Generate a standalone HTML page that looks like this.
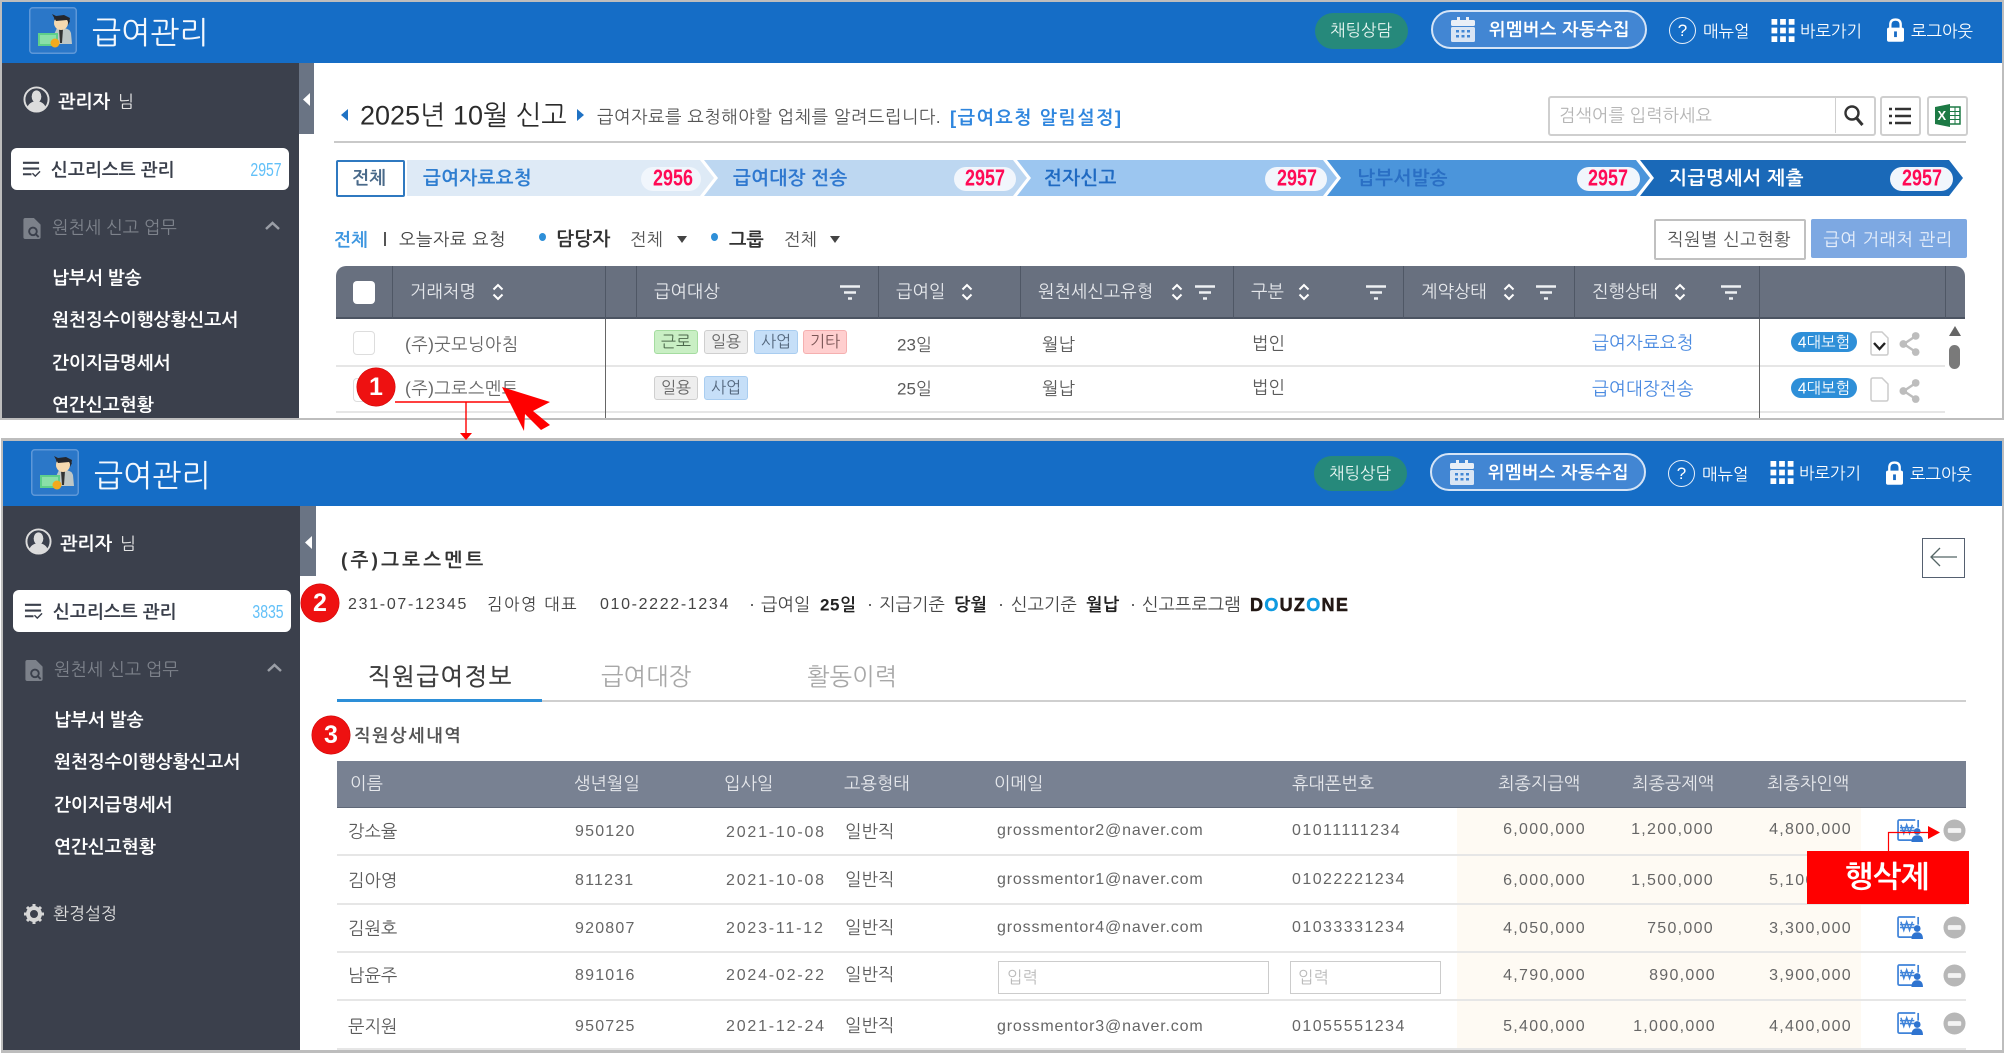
<!DOCTYPE html>
<html lang="ko"><head><meta charset="utf-8"><title>급여관리</title>
<style>
html,body{margin:0;padding:0;background:#fff}
body{width:2004px;height:1053px;position:relative;overflow:hidden;font-family:"Liberation Sans","NanumGothic","Noto Sans CJK KR",sans-serif;color:#5a5a5a}
.p{position:absolute;left:0;width:2004px;overflow:hidden}
.b{position:absolute}
.t{position:absolute;white-space:nowrap;line-height:1;transform:translateY(calc(-50% + 1px));font-size:17px}
.c{position:absolute;white-space:nowrap;line-height:1;transform:translate(-50%,calc(-50% + 1px));font-size:17px}
.w{color:#fff}.bd{font-weight:700}
.menu{color:#fff;font-weight:700;font-size:18px}
.st{font-weight:700;font-size:19px;letter-spacing:.3px}
.bn{position:absolute;white-space:nowrap;line-height:1;transform:translate(-50%,-50%) scaleX(.78);font-size:23px;font-weight:700;color:#ff0a55}
.pill{position:absolute;background:#f1f6fc;border-radius:12px;height:24px;top:167px}
.tag{position:absolute;height:22px;line-height:24px;width:42px;text-align:center;font-size:16px;border-radius:3px;border:1px solid}
.tg{background:#c9efc4;border-color:#a5dca0;color:#4d6a4d}
.ty{background:#eeeeee;border-color:#cfcfcf;color:#666}
.tb{background:#c6dff8;border-color:#a9cdf0;color:#54677d}
.tr{background:#ffcfcf;border-color:#f5b0b0;color:#7a5555}
.hd{color:#e6e8ec;font-size:17.5px}
.rowline{position:absolute;height:2px;background:#e6e6e6}
.n{position:absolute;white-space:nowrap;line-height:1;transform:translateY(calc(-50% + 1px));font-size:16px;letter-spacing:1.2px;color:#666}
.d{letter-spacing:1.8px}
.ph{letter-spacing:1.45px}
.em{letter-spacing:.85px}
.r{position:absolute;white-space:nowrap;line-height:1;transform:translateY(calc(-50% + 1px));font-size:16px;letter-spacing:1.3px;color:#666;text-align:right}
.circle{position:absolute;width:38px;height:38px;border-radius:50%;background:#ee1111;color:#fff;font-weight:700;font-size:25px;text-align:center;line-height:38px;box-shadow:0 0 0 .5px #c00}
svg{position:absolute;overflow:visible}
</style></head><body>
<svg width="0" height="0" style="position:absolute">
<defs>
<symbol id="logo" viewBox="0 0 48 47" overflow="visible">
<rect x=".75" y=".75" width="46.5" height="45.5" rx="3" fill="#2b77c8" stroke="#5d97d8" stroke-width="1.5"/>
<path d="M22 34l6-13h7q6 1 7 5l1 11H22z" fill="#bfc7c6"/>
<path d="M30 22h4l-1 14h-2z" fill="#333"/>
<rect x="9" y="26" width="20" height="13" fill="#5fcf8a"/>
<rect x="11" y="28" width="16" height="9" fill="#8ae0a8"/>
<circle cx="26" cy="36" r="4.5" fill="#f3aa1e"/>
<path d="M25 10l3 2 8-3 5 5-2 4H26z" fill="#2b2b30"/>
<ellipse cx="32" cy="16" rx="7" ry="7" fill="#f5d9b0"/>
<path d="M23 7l4 7 11-1 2 3 1-5-6-3-8 1z" fill="#24262c"/>
</symbol>
<symbol id="sort" viewBox="0 0 12 18" overflow="visible"><path d="M1.5 6.5L6 2l4.500 4.500M1.500 11.500L6 16l4.500-4.500" fill="none" stroke="#fff" stroke-width="2"/></symbol>
<symbol id="filter" viewBox="0 0 20 15" overflow="visible"><path d="M0 1.500h20M4 7.500h12M8 13.500h4" stroke="#eef0f3" stroke-width="2.600"/></symbol>
<symbol id="user" viewBox="0 0 28 28" overflow="visible"><circle cx="14" cy="14" r="12.500" fill="#3b404c" stroke="#dcdcdc" stroke-width="2"/><ellipse cx="14" cy="11" rx="5" ry="6.500" fill="#dcdcdc"/><path d="M4.500 22c2-5 6-6 9.500-6s7.500 1 9.500 6c-5 5-14 5-19 0z" fill="#dcdcdc"/></symbol>
<symbol id="mlist" viewBox="0 0 20 20" overflow="visible"><path d="M1 3h17M1 9h17M1 15h9" stroke="#3b404c" stroke-width="2.200"/><path d="M11 14l3 3 5-5" fill="none" stroke="#3b404c" stroke-width="1.500"/></symbol>
<symbol id="doc" viewBox="0 0 18 22" overflow="visible"><path d="M0 2q0-2 2-2h9l7 7v13q0 2-2 2H2q-2 0-2-2z" fill="#7c818a"/><circle cx="10" cy="14" r="4" fill="none" stroke="#3b404c" stroke-width="2"/><path d="M13 17l3 3" stroke="#3b404c" stroke-width="2"/></symbol>
<symbol id="cal" viewBox="0 0 24 26" overflow="visible"><path d="M6 0h3v4H6zM15 0h3v4h-3z" fill="#e9eff7"/><rect y="3" width="24" height="6" rx="1.500" fill="#e9eff7"/><rect y="10" width="24" height="15" rx="1.500" fill="#d9e5f4"/><path d="M5 13h3v2.500H5zM10.500 13h3v2.500h-3zM16 13h3v2.500h-3zM5 18h3v2.500H5zM10.500 18h3v2.500h-3zM16 18h3v2.500h-3z" fill="#4286d3"/></symbol>
<symbol id="grid" viewBox="0 0 24 24" overflow="visible"><path d="M0 0h6v6H0zM9 0h6v6H9zM18 0h6v6h-6zM0 9h6v6H0zM9 9h6v6H9zM18 9h6v6h-6zM0 18h6v6H0zM9 18h6v6H9zM18 18h6v6h-6z" fill="#fff"/></symbol>
<symbol id="lock" viewBox="0 0 18 25" overflow="visible"><path d="M3.500 11V7q0-5.500 5.500-5.500T14.500 7v4" fill="none" stroke="#fff" stroke-width="2.500"/><rect y="10" width="18" height="15" rx="2" fill="#fff"/><rect x="7.500" y="14" width="3" height="6" fill="#1a6cc5"/></symbol>
<symbol id="share" viewBox="0 0 22 26" overflow="visible"><path d="M17 5L5 13l12 8" fill="none" stroke="#bdbdbd" stroke-width="2.500"/><circle cx="17.500" cy="4.500" r="4" fill="#bdbdbd"/><circle cx="4.500" cy="13" r="4" fill="#bdbdbd"/><circle cx="17.500" cy="21.500" r="4" fill="#bdbdbd"/></symbol>
<symbol id="pay" viewBox="0 0 28 24" overflow="visible"><path d="M19 1H2.500Q1 1 1 2.500v18Q1 22 2.500 22H22" fill="#fff" stroke="#3f83d9" stroke-width="1.800"/><path d="M22 1v8" stroke="#3f83d9" stroke-width="1.800"/><path d="M4 6l3 9 3-9 3 9 3-9M3 9h15M3 12h15" fill="none" stroke="#3f83d9" stroke-width="1.500"/><circle cx="21" cy="13" r="3.500" fill="#2f74d0"/><path d="M15 24q0-7 6-7t6 7z" fill="#2f74d0"/></symbol>
<symbol id="minus" viewBox="0 0 24 24" overflow="visible"><circle cx="12" cy="12" r="11.500" fill="#b7b7b7"/><rect x="5" y="9.500" width="14" height="5" rx="1.500" fill="#f3f3f3"/></symbol>
</defs></svg>

<!-- PANEL 1 -->
<div class="p" style="top:0;height:418px">
<div class="b" style="left:2px;top:2px;width:2000px;height:61px;background:#156dc6"></div>
<svg style="left:29px;top:7px" width="48" height="47"><use href="#logo"/></svg>
<div class="t w" style="left:92px;top:32px;font-size:31px;color:#f4f8fd">급여관리</div>
<div class="b" style="left:1315px;top:13px;width:93px;height:36px;border-radius:18px;background:#26897b"></div>
<div class="c w" style="left:1361px;top:30px;font-size:16.500px;color:#e8f5f1">채팅상담</div>
<div class="b" style="left:1431px;top:10px;width:212px;height:35px;border-radius:20px;background:#4286d3;border:2px solid #d5e4f6"></div>
<svg style="left:1451px;top:17px" width="24" height="26"><use href="#cal"/></svg>
<div class="t w bd" style="left:1489px;top:29px;font-size:17.500px;letter-spacing:.5px">위멤버스 자동수집</div>
<div class="b" style="left:1669px;top:17px;width:25px;height:25px;border:1.500px solid #e8f0fa;border-radius:50%;color:#fff;font-size:17px;line-height:25px;text-align:center">?</div>
<div class="t w" style="left:1703px;top:31px;font-size:16.500px">매뉴얼</div>
<svg style="left:1771px;top:19px" width="24" height="23"><use href="#grid"/></svg>
<div class="t w" style="left:1800px;top:31px;font-size:16.500px">바로가기</div>
<svg style="left:1887px;top:18px" width="17" height="24"><use href="#lock"/></svg>
<div class="t w" style="left:1911px;top:31px;font-size:16.500px">로그아웃</div>

<div class="b" style="left:2px;top:63px;width:297px;height:355px;background:#3b404c"></div>
<div class="b" style="left:299px;top:63px;width:15px;height:71px;background:#6a7484"></div>
<svg style="left:303px;top:93px" width="7" height="13"><path d="M7 0v13L0 6.500z" fill="#fff"/></svg>
<svg style="left:23px;top:86px" width="27" height="27"><use href="#user"/></svg>
<div class="t w bd" style="left:58px;top:101px;font-size:18.500px">관리자</div>
<div class="t" style="left:118px;top:101px;font-size:17px;color:#e4e4e4">님</div>
<div class="b" style="left:11px;top:148px;width:278px;height:42px;background:#fff;border-radius:6px"></div>
<svg style="left:22px;top:160px" width="19" height="19"><use href="#mlist"/></svg>
<div class="t bd" style="left:51px;top:169px;font-size:18px;color:#3b404c">신고리스트 관리</div>
<div class="c" style="left:266px;top:169px;font-size:18px;color:#62c0f8;transform:translate(-50%,calc(-50% + 1px)) scaleX(.78)">2957</div>
<svg style="left:23px;top:218px" width="18" height="21"><use href="#doc"/></svg>
<div class="t" style="left:52px;top:227px;font-size:17.500px;color:#7e838c">원천세 신고 업무</div>
<svg style="left:265px;top:221px" width="15" height="10"><path d="M1 8l6.500-6L14 8" fill="none" stroke="#9a9ea6" stroke-width="2.500"/></svg>
<div class="t menu" style="left:52px;top:277px">납부서 발송</div>
<div class="t menu" style="left:52px;top:319px">원천징수이행상황신고서</div>
<div class="t menu" style="left:52px;top:362px">간이지급명세서</div>
<div class="t menu" style="left:52px;top:404px">연간신고현황</div>

<svg style="left:341px;top:109px" width="7" height="12"><path d="M7 0v12L0 6z" fill="#1f72c4"/></svg>
<div class="t" style="left:360px;top:115px;font-size:27px;color:#2b2b2b">2025년 10월 신고</div>
<svg style="left:577px;top:109px" width="7" height="12"><path d="M0 0v12l7-6z" fill="#1f72c4"/></svg>
<div class="t" style="left:597px;top:117px;font-size:17.600px;color:#555;letter-spacing:.45px">급여자료를 요청해야할 업체를 알려드립니다.</div>
<div class="t bd" style="left:950px;top:117px;font-size:18.500px;color:#2f86de;letter-spacing:1.45px">[급여요청 알림설정]</div>
<div class="b" style="left:334px;top:141px;width:1632px;height:2px;background:#c9c9c9"></div>

<div class="b" style="left:1548px;top:96px;width:324px;height:36px;border:2px solid #cfcfcf;border-radius:3px;background:#fff"></div>
<div class="b" style="left:1835px;top:97px;width:1px;height:36px;background:#cfcfcf"></div>
<div class="t" style="left:1559px;top:115px;font-size:17.500px;color:#b5b5b5">검색어를 입력하세요</div>
<svg style="left:1844px;top:105px" width="20" height="21"><circle cx="8" cy="8" r="6.500" fill="none" stroke="#333" stroke-width="2.400"/><path d="M12.500 13l6 7" stroke="#333" stroke-width="3"/></svg>
<div class="b" style="left:1880px;top:96px;width:37px;height:36px;border:2px solid #cfcfcf;border-radius:3px"></div>
<svg style="left:1889px;top:107px" width="22" height="18"><path d="M0 2h3M6 2h16M0 9h3M6 9h16M0 16h3M6 16h16" stroke="#333" stroke-width="2.500"/></svg>
<div class="b" style="left:1927px;top:96px;width:37px;height:36px;border:2px solid #cfcfcf;border-radius:3px"></div>
<svg style="left:1935px;top:104px" width="26" height="23"><path d="M0 3l15-3v23L0 20z" fill="#1d7a45"/><path d="M15 3h10v17H15" fill="none" stroke="#1d7a45" stroke-width="1.500"/><path d="M15 7.500h10M15 11.500h10M15 15.500h10M20 3v17" stroke="#1d7a45"/><text x="2.500" y="16" font-size="13" font-weight="700" fill="#fff" font-family="Liberation Sans">X</text></svg>

<svg style="left:0;top:0" width="2004" height="200">
<polygon points="407,160 700,160 714,178 700,196 407,196" fill="#deeaf6"/>
<polygon points="704,160 1013,160 1027,178 1013,196 704,196 718,178" fill="#bdd7f1"/>
<polygon points="1017,160 1323,160 1337,178 1323,196 1017,196 1031,178" fill="#9cc6f0"/>
<polygon points="1327,160 1636,160 1650,178 1636,196 1327,196 1341,178" fill="#4b95db"/>
<polygon points="1640,160 1949,160 1963,178 1949,196 1640,196 1654,178" fill="#1a69b8"/>
</svg>
<div class="b" style="left:336px;top:160px;width:65px;height:33px;background:#fff;border:2px solid #2f79c0;border-radius:2px"></div>
<div class="c bd" style="left:369px;top:177px;font-size:18px;color:#4a6a8a">전체</div>
<div class="t st" style="left:423px;top:178px;color:#2f7ed0">급여자료요청</div>
<div class="pill" style="left:641px;width:60px"></div><div class="bn" style="left:673px;top:178px">2956</div>
<div class="t st" style="left:733px;top:178px;color:#2f78cf">급여대장 전송</div>
<div class="pill" style="left:954px;width:62px"></div><div class="bn" style="left:985px;top:178px">2957</div>
<div class="t st" style="left:1044px;top:178px;color:#1f6ac2">전자신고</div>
<div class="pill" style="left:1265px;width:62px"></div><div class="bn" style="left:1297px;top:178px">2957</div>
<div class="t st" style="left:1357px;top:178px;color:#2a6fc4">납부서발송</div>
<div class="pill" style="left:1577px;width:63px"></div><div class="bn" style="left:1608px;top:178px">2957</div>
<div class="t w st" style="left:1669px;top:178px;letter-spacing:.6px">지급명세서 제출</div>
<div class="pill" style="left:1890px;width:63px"></div><div class="bn" style="left:1922px;top:178px">2957</div>

<div class="t bd" style="left:334px;top:239px;font-size:18px;color:#3f97e0">전체</div>
<div class="b" style="left:384px;top:232px;width:2px;height:14px;background:#555"></div>
<div class="t" style="left:399px;top:239px;font-size:17.500px;color:#444;letter-spacing:.5px">오늘자료 요청</div>
<div class="b" style="left:539px;top:233px;width:7px;height:8px;border-radius:50%;background:#2e8fd8"></div>
<div class="t bd" style="left:556px;top:239px;font-size:19px;color:#333;letter-spacing:.3px">담당자</div>
<div class="t" style="left:630px;top:239px;font-size:17.500px;color:#555">전체</div>
<svg style="left:677px;top:236px" width="10" height="7"><path d="M0 0h10L5 7z" fill="#444"/></svg>
<div class="b" style="left:711px;top:233px;width:7px;height:8px;border-radius:50%;background:#2e8fd8"></div>
<div class="t bd" style="left:729px;top:239px;font-size:18.500px;color:#333">그룹</div>
<div class="t" style="left:784px;top:239px;font-size:17.500px;color:#555">전체</div>
<svg style="left:830px;top:236px" width="10" height="7"><path d="M0 0h10L5 7z" fill="#444"/></svg>

<div class="b" style="left:1654px;top:219px;width:148px;height:37px;border:2px solid #c0c0c0;border-radius:2px;background:#fff"></div>
<div class="c" style="left:1729px;top:239px;font-size:17.500px;color:#555;letter-spacing:.5px">직원별 신고현황</div>
<div class="b" style="left:1811px;top:219px;width:156px;height:39px;background:#7da8e2;border-radius:2px"></div>
<div class="c" style="left:1888px;top:239px;font-size:17.500px;color:#e9f0fb;letter-spacing:.5px">급여 거래처 관리</div>

<div class="b" style="left:336px;top:266px;width:1629px;height:51px;background:#68707f;border-bottom:2px solid #4c5462;border-radius:10px 10px 0 0"></div>
<div class="b" style="left:392px;top:266px;width:1px;height:53px;background:#4f5765"></div>
<div class="b" style="left:605px;top:266px;width:1px;height:53px;background:#4f5765"></div>
<div class="b" style="left:636px;top:266px;width:1px;height:53px;background:#4f5765"></div>
<div class="b" style="left:878px;top:266px;width:1px;height:53px;background:#4f5765"></div>
<div class="b" style="left:1020px;top:266px;width:1px;height:53px;background:#4f5765"></div>
<div class="b" style="left:1233px;top:266px;width:1px;height:53px;background:#4f5765"></div>
<div class="b" style="left:1403px;top:266px;width:1px;height:53px;background:#4f5765"></div>
<div class="b" style="left:1574px;top:266px;width:1px;height:53px;background:#4f5765"></div>
<div class="b" style="left:1759px;top:266px;width:1px;height:53px;background:#4f5765"></div>
<div class="b" style="left:1945px;top:266px;width:1px;height:53px;background:#4f5765"></div>
<div class="b" style="left:353px;top:281px;width:22px;height:23px;background:#fff;border-radius:4px"></div>
<div class="t hd" style="left:410px;top:291px">거래처명</div>
<svg style="left:492px;top:283px" width="12" height="18"><use href="#sort"/></svg>
<div class="t hd" style="left:654px;top:291px">급여대상</div>
<svg style="left:840px;top:285px" width="20" height="15"><use href="#filter"/></svg>
<div class="t hd" style="left:896px;top:291px">급여일</div>
<svg style="left:961px;top:283px" width="12" height="18"><use href="#sort"/></svg>
<div class="t hd" style="left:1038px;top:291px">원천세신고유형</div>
<svg style="left:1171px;top:283px" width="12" height="18"><use href="#sort"/></svg>
<svg style="left:1195px;top:285px" width="20" height="15"><use href="#filter"/></svg>
<div class="t hd" style="left:1251px;top:291px">구분</div>
<svg style="left:1298px;top:283px" width="12" height="18"><use href="#sort"/></svg>
<svg style="left:1366px;top:285px" width="20" height="15"><use href="#filter"/></svg>
<div class="t hd" style="left:1421px;top:291px">계약상태</div>
<svg style="left:1503px;top:283px" width="12" height="18"><use href="#sort"/></svg>
<svg style="left:1536px;top:285px" width="20" height="15"><use href="#filter"/></svg>
<div class="t hd" style="left:1592px;top:291px">진행상태</div>
<svg style="left:1674px;top:283px" width="12" height="18"><use href="#sort"/></svg>
<svg style="left:1721px;top:285px" width="20" height="15"><use href="#filter"/></svg>

<div class="rowline" style="left:336px;top:365px;width:1609px"></div>
<div class="rowline" style="left:336px;top:411px;width:1609px"></div>
<div class="b" style="left:605px;top:319px;width:1px;height:99px;background:#666"></div>
<div class="b" style="left:1759px;top:319px;width:1px;height:99px;background:#666"></div>
<div class="b" style="left:353px;top:331px;width:20px;height:22px;border:1.500px solid #ddd;border-radius:4px"></div>
<div class="b" style="left:353px;top:378px;width:20px;height:22px;border:1.500px solid #ddd;border-radius:4px"></div>
<div class="t" style="left:405px;top:344px;font-size:17.500px;color:#666;letter-spacing:.4px">(주)굿모닝아침</div>
<div class="t" style="left:405px;top:388px;font-size:17.500px;color:#666;letter-spacing:.4px">(주)그로스멘트</div>
<div class="tag tg" style="left:654px;top:330px">근로</div>
<div class="tag ty" style="left:704px;top:330px">일용</div>
<div class="tag tb" style="left:754px;top:330px">사업</div>
<div class="tag tr" style="left:803px;top:330px">기타</div>
<div class="tag ty" style="left:654px;top:376px">일용</div>
<div class="tag tb" style="left:704px;top:376px">사업</div>
<div class="t" style="left:897px;top:344px;font-size:17px">23일</div>
<div class="t" style="left:897px;top:388px;font-size:17px">25일</div>
<div class="t" style="left:1042px;top:344px;font-size:17.500px">월납</div>
<div class="t" style="left:1042px;top:388px;font-size:17.500px">월납</div>
<div class="t" style="left:1252px;top:343px;font-size:17.500px">법인</div>
<div class="t" style="left:1252px;top:387px;font-size:17.500px">법인</div>
<div class="t" style="left:1592px;top:342px;font-size:18px;color:#4a8ae0">급여자료요청</div>
<div class="t" style="left:1592px;top:388px;font-size:18px;color:#4a8ae0">급여대장전송</div>
<div class="b" style="left:1791px;top:332px;width:66px;height:20px;border-radius:10px;background:#2e8fd8"></div>
<div class="c w" style="left:1824px;top:342px;font-size:15.500px">4대보험</div>
<div class="b" style="left:1791px;top:378px;width:66px;height:20px;border-radius:10px;background:#2e8fd8"></div>
<div class="c w" style="left:1824px;top:388px;font-size:15.500px">4대보험</div>
<svg style="left:1870px;top:331px" width="19" height="25"><path d="M1 3q0-2 2-2h9l6 6v15q0 2-2 2H3q-2 0-2-2z" fill="#fff" stroke="#ccc" stroke-width="1.500"/><path d="M4 12l5.500 6L15 12" fill="none" stroke="#222" stroke-width="2.400"/></svg>
<svg style="left:1870px;top:377px" width="19" height="25"><path d="M1 3q0-2 2-2h9l6 6v15q0 2-2 2H3q-2 0-2-2z" fill="#fff" stroke="#ccc" stroke-width="1.500"/></svg>
<svg style="left:1899px;top:331px" width="21" height="26"><use href="#share"/></svg>
<svg style="left:1899px;top:378px" width="21" height="26"><use href="#share"/></svg>
<svg style="left:1949px;top:326px" width="12" height="10"><path d="M6 0l6 10H0z" fill="#666"/></svg>
<div class="b" style="left:1949px;top:345px;width:11px;height:24px;border-radius:6px;background:#7a7a7a"></div>
</div>

<!-- frame lines -->
<div class="b" style="left:0;top:0;width:2004px;height:2px;background:#bdbdbd"></div>
<div class="b" style="left:0;top:0;width:2px;height:420px;background:#bdbdbd"></div>
<div class="b" style="left:2002px;top:0;width:2px;height:420px;background:#bdbdbd"></div>
<div class="b" style="left:0;top:418px;width:2004px;height:2px;background:#bdbdbd"></div>

<!-- PANEL 2 -->
<div class="p" style="top:438px;height:615px">
<div style="position:absolute;left:0;top:-438px;width:2004px;height:1053px">
<div class="b" style="left:2px;top:438px;width:2001px;height:3px;background:#bdbdbd"></div>
<div class="b" style="left:1px;top:438px;width:2px;height:615px;background:#bdbdbd"></div>
<div class="b" style="left:2002px;top:438px;width:2px;height:615px;background:#bdbdbd"></div>
<div class="b" style="left:1px;top:1050px;width:2003px;height:3px;background:#bdbdbd"></div>
<div class="b" style="left:3px;top:441px;width:1999px;height:65px;background:#156dc6"></div>
<svg style="left:31px;top:449px" width="48" height="47"><use href="#logo"/></svg>
<div class="t" style="left:94px;top:475px;font-size:31px;color:#f4f8fd">급여관리</div>
<div class="b" style="left:1314px;top:456px;width:93px;height:35px;border-radius:18px;background:#26897b"></div>
<div class="c" style="left:1360px;top:473px;font-size:16.500px;color:#e8f5f1">채팅상담</div>
<div class="b" style="left:1430px;top:453px;width:212px;height:34px;border-radius:20px;background:#4286d3;border:2px solid #d5e4f6"></div>
<svg style="left:1450px;top:460px" width="24" height="26"><use href="#cal"/></svg>
<div class="t w bd" style="left:1488px;top:472px;font-size:17.500px;letter-spacing:.5px">위멤버스 자동수집</div>
<div class="b" style="left:1668px;top:460px;width:25px;height:25px;border:1.500px solid #e8f0fa;border-radius:50%;color:#fff;font-size:17px;line-height:25px;text-align:center">?</div>
<div class="t w" style="left:1702px;top:474px;font-size:16.500px">매뉴얼</div>
<svg style="left:1770px;top:461px" width="24" height="23"><use href="#grid"/></svg>
<div class="t w" style="left:1799px;top:473px;font-size:16.500px">바로가기</div>
<svg style="left:1886px;top:461px" width="17" height="24"><use href="#lock"/></svg>
<div class="t w" style="left:1910px;top:474px;font-size:16.500px">로그아웃</div>

<div class="b" style="left:3px;top:506px;width:297px;height:544px;background:#3b404c"></div>
<div class="b" style="left:300px;top:506px;width:16px;height:70px;background:#6a7484"></div>
<svg style="left:305px;top:536px" width="7" height="13"><path d="M7 0v13L0 6.500z" fill="#fff"/></svg>
<svg style="left:25px;top:528px" width="27" height="27"><use href="#user"/></svg>
<div class="t w bd" style="left:60px;top:543px;font-size:18.500px">관리자</div>
<div class="t" style="left:120px;top:543px;font-size:17px;color:#e4e4e4">님</div>
<div class="b" style="left:13px;top:590px;width:278px;height:42px;background:#fff;border-radius:6px"></div>
<svg style="left:24px;top:602px" width="19" height="19"><use href="#mlist"/></svg>
<div class="t bd" style="left:53px;top:611px;font-size:18px;color:#3b404c">신고리스트 관리</div>
<div class="c" style="left:268px;top:611px;font-size:18px;color:#62c0f8;transform:translate(-50%,calc(-50% + 1px)) scaleX(.78)">3835</div>
<svg style="left:25px;top:660px" width="18" height="21"><use href="#doc"/></svg>
<div class="t" style="left:54px;top:669px;font-size:17.500px;color:#7e838c">원천세 신고 업무</div>
<svg style="left:267px;top:663px" width="15" height="10"><path d="M1 8l6.500-6L14 8" fill="none" stroke="#9a9ea6" stroke-width="2.500"/></svg>
<div class="t menu" style="left:54px;top:719px">납부서 발송</div>
<div class="t menu" style="left:54px;top:761px">원천징수이행상황신고서</div>
<div class="t menu" style="left:54px;top:804px">간이지급명세서</div>
<div class="t menu" style="left:54px;top:846px">연간신고현황</div>
<svg style="left:24px;top:904px" width="20" height="20"><circle cx="10" cy="10" r="6" fill="none" stroke="#d6d6d6" stroke-width="4"/><path d="M10 0v4M10 16v4M0 10h4M16 10h4M3 3l3 3M14 14l3 3M17 3l-3 3M6 14l-3 3" stroke="#d6d6d6" stroke-width="3"/></svg>
<div class="t" style="left:53px;top:913px;font-size:17px;color:#e0e0e0">환경설정</div>

<div class="t bd" style="left:341px;top:560px;font-size:19px;color:#333;letter-spacing:3.200px">(주)그로스멘트</div>
<div class="b" style="left:1922px;top:538px;width:41px;height:38px;border:1.500px solid #556070"></div>
<svg style="left:1930px;top:547px" width="27" height="20"><path d="M27 10H1M10 1l-9 9 9 9" fill="none" stroke="#566" stroke-width="1.300"/></svg>
<div class="t" style="left:348px;top:604px;font-size:16px;letter-spacing:1.700px;color:#444">231-07-12345</div>
<div class="t" style="left:487px;top:604px;font-size:16.500px;letter-spacing:1.500px;color:#444">김아영 대표</div>
<div class="t" style="left:600px;top:604px;font-size:16px;letter-spacing:1.650px;color:#444">010-2222-1234</div>
<div class="b" style="left:751px;top:604px;width:2px;height:2px;background:#666"></div>
<div class="t" style="left:761px;top:604px;font-size:17.500px;color:#444">급여일</div>
<div class="t bd" style="left:820px;top:604px;font-size:17px;color:#222;letter-spacing:.6px">25일</div>
<div class="b" style="left:869px;top:604px;width:2px;height:2px;background:#666"></div>
<div class="t" style="left:879px;top:604px;font-size:17.500px;color:#444">지급기준</div>
<div class="t bd" style="left:954px;top:604px;font-size:17.500px;color:#222">당월</div>
<div class="b" style="left:1000px;top:604px;width:2px;height:2px;background:#666"></div>
<div class="t" style="left:1011px;top:604px;font-size:17.500px;color:#444">신고기준</div>
<div class="t bd" style="left:1086px;top:604px;font-size:17.500px;color:#222">월납</div>
<div class="b" style="left:1132px;top:604px;width:2px;height:2px;background:#666"></div>
<div class="t" style="left:1142px;top:604px;font-size:17.500px;color:#444">신고프로그램</div>
<div class="t bd" style="left:1250px;top:604px;font-size:18px;color:#231815;letter-spacing:1.300px;-webkit-text-stroke:.5px #231815">D<span style="color:#0e9ae0;-webkit-text-stroke:.5px #0e9ae0">O</span>UZ<span style="color:#0e9ae0;-webkit-text-stroke:.5px #0e9ae0">O</span>NE</div>

<div class="t" style="left:368px;top:677px;font-size:24px;color:#3a3a3a;letter-spacing:1.600px;-webkit-text-stroke:.4px #3a3a3a">직원급여정보</div>
<div class="t" style="left:601px;top:677px;font-size:24px;color:#a8a8a8">급여대장</div>
<div class="t" style="left:807px;top:677px;font-size:24px;color:#a8a8a8">활동이력</div>
<div class="b" style="left:337px;top:700px;width:1629px;height:2px;background:#cfcfcf"></div>
<div class="b" style="left:337px;top:699px;width:205px;height:3px;background:#2d8fd8"></div>
<div class="t bd" style="left:354px;top:735px;font-size:17.500px;color:#555;letter-spacing:1.600px">직원상세내역</div>

<div class="b" style="left:337px;top:761px;width:1629px;height:46px;background:#788192;border-bottom:1.500px solid #5f6878"></div>
<div class="t hd" style="left:350px;top:783px">이름</div>
<div class="t hd" style="left:574px;top:783px">생년월일</div>
<div class="t hd" style="left:724px;top:783px">입사일</div>
<div class="t hd" style="left:844px;top:783px">고용형태</div>
<div class="t hd" style="left:994px;top:783px">이메일</div>
<div class="t hd" style="left:1292px;top:783px">휴대폰번호</div>
<div class="t hd" style="left:1498px;top:783px">최종지급액</div>
<div class="t hd" style="left:1632px;top:783px">최종공제액</div>
<div class="t hd" style="left:1767px;top:783px">최종차인액</div>

<div class="b" style="left:1457px;top:808px;width:404px;height:240px;background:#fefaf3"></div>
<div class="rowline" style="left:337px;top:854px;width:1629px"></div>
<div class="rowline" style="left:337px;top:903px;width:1629px"></div>
<div class="rowline" style="left:337px;top:951px;width:1629px"></div>
<div class="rowline" style="left:337px;top:999px;width:1629px"></div>
<div class="rowline" style="left:337px;top:1048px;width:1629px"></div>

<div class="t" style="left:348px;top:831px;font-size:17.500px">강소율</div>
<div class="t" style="left:348px;top:880px;font-size:17.500px">김아영</div>
<div class="t" style="left:348px;top:928px;font-size:17.500px">김원호</div>
<div class="t" style="left:348px;top:975px;font-size:17.500px">남윤주</div>
<div class="t" style="left:348px;top:1026px;font-size:17.500px">문지원</div>
<div class="n" style="left:575px;top:831px">950120</div>
<div class="n" style="left:575px;top:880px">811231</div>
<div class="n" style="left:575px;top:928px">920807</div>
<div class="n" style="left:575px;top:975px">891016</div>
<div class="n" style="left:575px;top:1026px">950725</div>
<div class="n d" style="left:726px;top:832px">2021-10-08</div>
<div class="n d" style="left:726px;top:880px">2021-10-08</div>
<div class="n d" style="left:726px;top:928px">2023-11-12</div>
<div class="n d" style="left:726px;top:975px">2024-02-22</div>
<div class="n d" style="left:726px;top:1026px">2021-12-24</div>
<div class="t" style="left:845px;top:831px;font-size:17.500px">일반직</div>
<div class="t" style="left:845px;top:879px;font-size:17.500px">일반직</div>
<div class="t" style="left:845px;top:927px;font-size:17.500px">일반직</div>
<div class="t" style="left:845px;top:974px;font-size:17.500px">일반직</div>
<div class="t" style="left:845px;top:1025px;font-size:17.500px">일반직</div>
<div class="n em" style="left:997px;top:830px">grossmentor2@naver.com</div>
<div class="n em" style="left:997px;top:879px">grossmentor1@naver.com</div>
<div class="n em" style="left:997px;top:927px">grossmentor4@naver.com</div>
<div class="n em" style="left:997px;top:1026px">grossmentor3@naver.com</div>
<div class="b" style="left:998px;top:961px;width:269px;height:31px;border:1.500px solid #ccc"></div>
<div class="t" style="left:1007px;top:977px;font-size:16.500px;color:#bbb">입력</div>
<div class="b" style="left:1290px;top:961px;width:149px;height:31px;border:1.500px solid #ccc"></div>
<div class="t" style="left:1298px;top:977px;font-size:16.500px;color:#bbb">입력</div>
<div class="n ph" style="left:1292px;top:830px">01011111234</div>
<div class="n ph" style="left:1292px;top:879px">01022221234</div>
<div class="n ph" style="left:1292px;top:927px">01033331234</div>
<div class="n ph" style="left:1292px;top:1026px">01055551234</div>

<div class="r" style="right:418px;top:829px">6,000,000</div><div class="r" style="right:290px;top:829px">1,200,000</div><div class="r" style="right:152px;top:829px">4,800,000</div>
<div class="r" style="right:418px;top:880px">6,000,000</div><div class="r" style="right:290px;top:880px">1,500,000</div><div class="r" style="right:152px;top:880px">5,100,000</div>
<div class="r" style="right:418px;top:928px">4,050,000</div><div class="r" style="right:290px;top:928px">750,000</div><div class="r" style="right:152px;top:928px">3,300,000</div>
<div class="r" style="right:418px;top:975px">4,790,000</div><div class="r" style="right:288px;top:975px">890,000</div><div class="r" style="right:152px;top:975px">3,900,000</div>
<div class="r" style="right:418px;top:1026px">5,400,000</div><div class="r" style="right:288px;top:1026px">1,000,000</div><div class="r" style="right:152px;top:1026px">4,400,000</div>

<svg style="left:1897px;top:819px" width="27" height="23"><use href="#pay"/></svg>
<svg style="left:1897px;top:916px" width="27" height="23"><use href="#pay"/></svg>
<svg style="left:1897px;top:964px" width="27" height="23"><use href="#pay"/></svg>
<svg style="left:1897px;top:1012px" width="27" height="23"><use href="#pay"/></svg>
<svg style="left:1943px;top:819px" width="23" height="23"><use href="#minus"/></svg>
<svg style="left:1943px;top:916px" width="23" height="23"><use href="#minus"/></svg>
<svg style="left:1943px;top:964px" width="23" height="23"><use href="#minus"/></svg>
<svg style="left:1943px;top:1012px" width="23" height="23"><use href="#minus"/></svg>

<div class="b" style="left:1807px;top:851px;width:162px;height:53px;background:#f00"></div>
<div class="c w bd" style="left:1887px;top:877px;font-size:30px">행삭제</div>
<svg style="left:1880px;top:820px" width="65" height="35"><path d="M8.500 32V12.500H48" fill="none" stroke="#f00" stroke-width="1.200"/><path d="M48 6l12 6.500L48 19z" fill="#f00"/></svg>
</div></div>

<!-- Annotations -->
<div class="circle" style="left:357px;top:368px">1</div>
<svg style="left:395px;top:400px" width="130" height="44"><path d="M0 2h120M71 2v32" fill="none" stroke="#f00" stroke-width="1.400"/><path d="M65 33h12l-6 7z" fill="#f00"/></svg>
<svg style="left:500px;top:385px" width="54" height="48"><path d="M2 2L50 17 33 26 50 40 41 45 25 29 24 46z" fill="#f00"/></svg>
<div class="circle" style="left:301px;top:584px">2</div>
<div class="circle" style="left:312px;top:716px">3</div>
</body></html>
